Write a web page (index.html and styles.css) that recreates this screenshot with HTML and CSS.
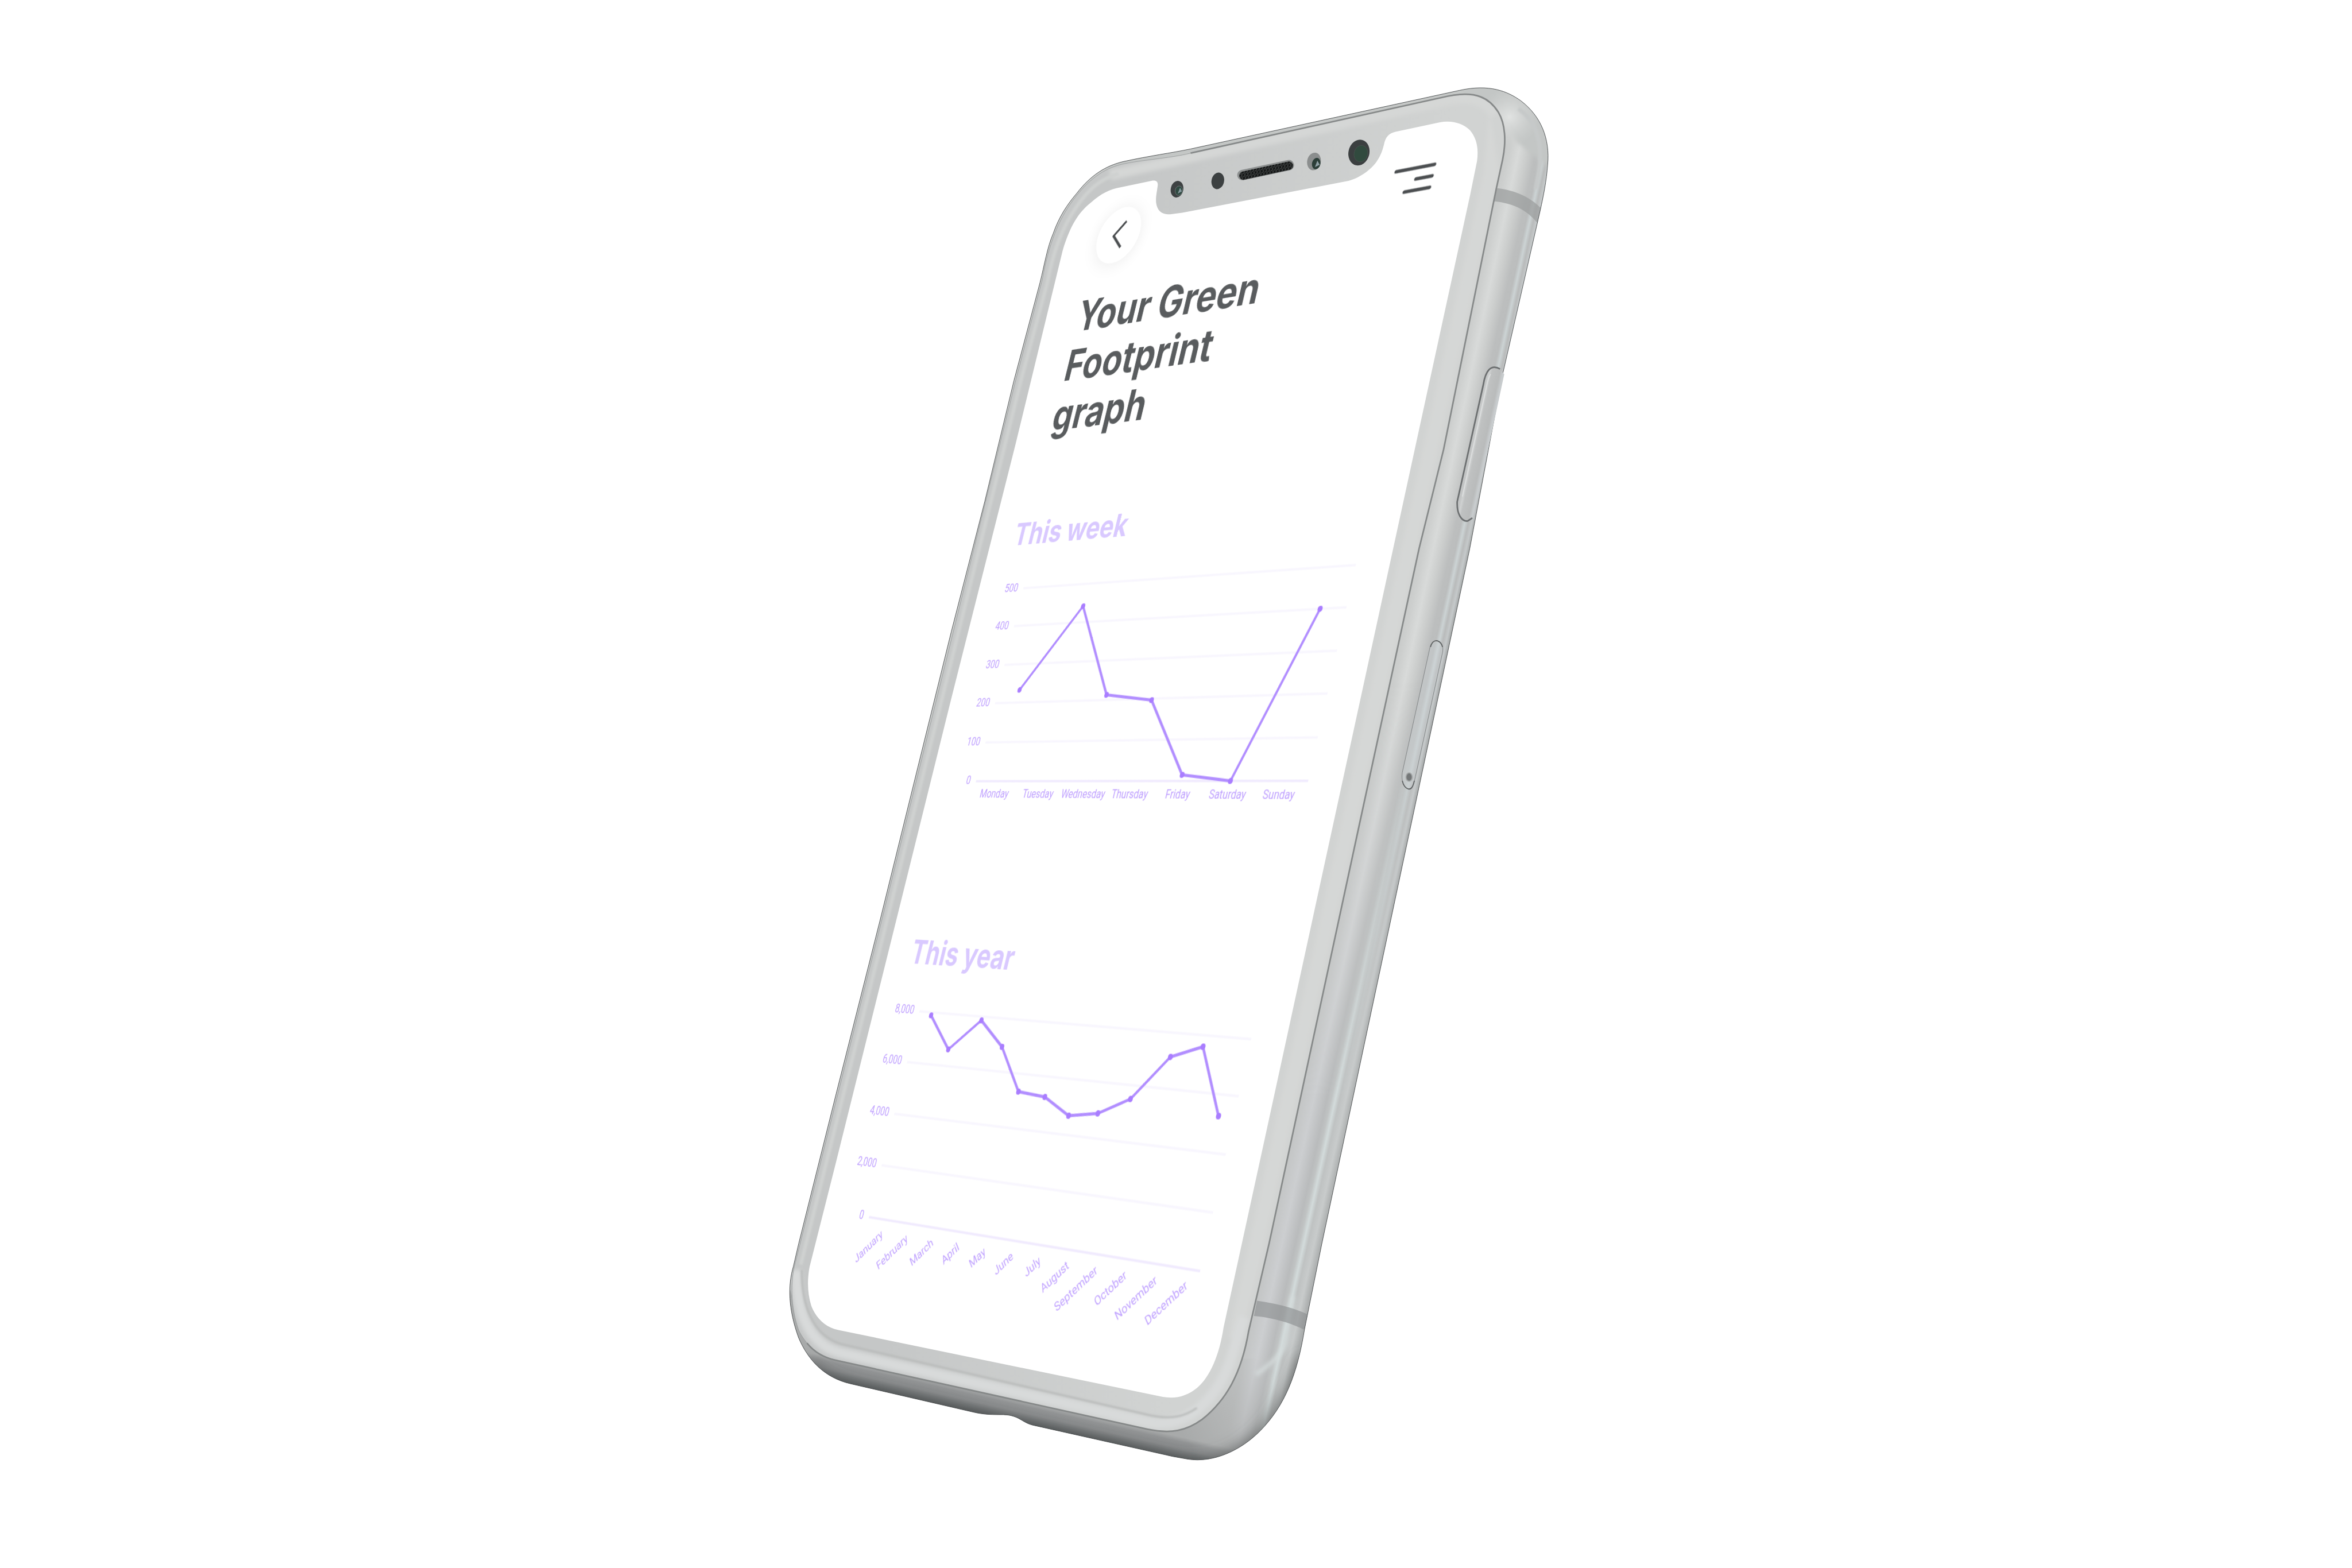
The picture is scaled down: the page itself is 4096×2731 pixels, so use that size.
FILE: index.html
```html
<!DOCTYPE html>
<html lang="en">
<head>
<meta charset="utf-8">
<meta name="viewport" content="width=device-width, initial-scale=1">
<title>Your Green Footprint graph</title>
<link rel="stylesheet" href="styles.css">
</head>
<body>
<main class="stage" id="stage">
  <svg class="phone" viewBox="0 0 4500 3000" aria-hidden="true">
    <defs>
      <linearGradient id="side" gradientUnits="userSpaceOnUse" x1="2715" y1="1050" x2="2808" y2="1070">
        <stop offset="0" stop-color="#c9cbca"/>
        <stop offset=".1" stop-color="#cdcfce"/>
        <stop offset=".28" stop-color="#d8dad9"/>
        <stop offset=".45" stop-color="#cbcdcc"/>
        <stop offset=".62" stop-color="#bcbebe"/>
        <stop offset=".72" stop-color="#bbbdbd"/>
        <stop offset=".79" stop-color="#ccd3d4"/>
        <stop offset=".86" stop-color="#b9bbbb"/>
        <stop offset=".93" stop-color="#c5c9ca"/>
        <stop offset="1" stop-color="#a3a6a6"/>
      </linearGradient>
      <linearGradient id="sideLow" gradientUnits="userSpaceOnUse" x1="2428" y1="2380" x2="2524" y2="2401">
        <stop offset="0" stop-color="#c3c5c5"/>
        <stop offset=".25" stop-color="#ccced0"/>
        <stop offset=".5" stop-color="#b9bbbc"/>
        <stop offset=".58" stop-color="#c0c3c3"/>
        <stop offset=".66" stop-color="#d3dbdb"/>
        <stop offset=".74" stop-color="#bfc2c2"/>
        <stop offset=".86" stop-color="#c8cbcb"/>
        <stop offset="1" stop-color="#abaeae"/>
      </linearGradient>
      <linearGradient id="lowFade" gradientUnits="userSpaceOnUse" x1="0" y1="1300" x2="0" y2="2100">
        <stop offset="0" stop-color="#000"/>
        <stop offset="1" stop-color="#fff"/>
      </linearGradient>
      <mask id="lowMask" maskUnits="userSpaceOnUse" x="1400" y="0" width="1700" height="3000">
        <rect x="1400" width="1700" height="3000" fill="url(#lowFade)"/>
      </mask>
      <linearGradient id="base" gradientUnits="userSpaceOnUse" x1="1901" y1="2668" x2="1891" y2="2712">
        <stop offset="0" stop-color="#a8aaaa"/>
        <stop offset=".2" stop-color="#929495"/>
        <stop offset=".5" stop-color="#888a8b"/>
        <stop offset=".6" stop-color="#7c7f80"/>
        <stop offset="1" stop-color="#55595a"/>
      </linearGradient>
      <linearGradient id="glass" gradientUnits="userSpaceOnUse" x1="1950" y1="1400" x2="2500" y2="1520">
        <stop offset="0" stop-color="#c5c7c7"/>
        <stop offset="1" stop-color="#d1d3d2"/>
      </linearGradient>
      <linearGradient id="baseFade" gradientUnits="userSpaceOnUse" x1="2250" y1="2720" x2="2420" y2="2620">
        <stop offset="0" stop-color="#fff"/>
        <stop offset="1" stop-color="#000"/>
      </linearGradient>
      <mask id="baseMask" maskUnits="userSpaceOnUse" x="1400" y="2300" width="1200" height="600">
        <rect x="1400" y="2300" width="1200" height="600" fill="url(#baseFade)"/>
      </mask>
      <radialGradient id="cornerGlow" gradientUnits="userSpaceOnUse" cx="2888" cy="224" r="56">
        <stop offset="0" stop-color="#e1e3e2"/>
        <stop offset="1" stop-color="#d4d6d5" stop-opacity="0"/>
      </radialGradient>
      <linearGradient id="key" gradientUnits="userSpaceOnUse" x1="2814" y1="860" x2="2856" y2="869">
        <stop offset="0" stop-color="#c2c4c4"/>
        <stop offset=".1" stop-color="#cfd1d1"/>
        <stop offset=".2" stop-color="#bfc1c1"/>
        <stop offset=".55" stop-color="#b9bbbb"/>
        <stop offset=".7" stop-color="#c9cdcf"/>
        <stop offset="1" stop-color="#b4b7b7"/>
      </linearGradient>
      <filter id="soft2" x="-20%" y="-20%" width="140%" height="140%"><feGaussianBlur stdDeviation="2"/></filter>
      <filter id="soft4" x="-20%" y="-20%" width="140%" height="140%"><feGaussianBlur stdDeviation="4"/></filter>
      <filter id="soft14" x="-20%" y="-20%" width="140%" height="140%"><feGaussianBlur stdDeviation="14"/></filter>
      <pattern id="mesh" width="6" height="6" patternUnits="userSpaceOnUse" patternTransform="rotate(-12)">
        <rect width="6" height="6" fill="#141616"/>
        <path d="M0 3h3M4 0v3M3 5h3" stroke="#5d6161" stroke-width="1"/>
      </pattern>
      <path id="body" d="M2150 309C2200 298 2240 293 2278 285L2792 173C2850 160 2885 175 2910 193C2948 222 2966 265 2961 316C2959 345 2953 375 2947 402L2875 716L2812 1050L2695 1600L2529 2380L2496 2543C2482 2630 2458 2690 2412 2737C2375 2775 2322 2800 2272 2792L2244 2787L1976 2727C1955 2722 1950 2708 1920 2707C1900 2707 1885 2707 1866 2703L1628 2648C1575 2636 1545 2600 1528 2560C1508 2505 1507 2460 1518 2423L1528 2380L1600 2092L1684 1760L1820 1209L1884 960L1940 728L1990 540C1998 508 2004 472 2015 447C2026 415 2042 391 2060 370C2086 336 2115 317 2150 309Z"/>
      <path id="seam" d="M2140 316C2170 307 2240 303 2278 293L2770 184C2825 173 2850 188 2867 215C2880 237 2882 270 2875 305L2863 360L2762 860L2715 1050L2596 1600L2428 2380L2389 2547C2375 2630 2345 2680 2300 2716C2270 2738 2240 2744 2196 2735L1600 2603C1560 2592 1540 2570 1528 2545C1512 2500 1512 2450 1522 2415L1688 1757L1944 725L1994 536C2004 480 2020 430 2048 390C2076 350 2105 326 2140 316Z"/>
      <path id="display" d="M2033 480C2048 430 2064 408 2082 392C2100 376 2115 365 2136 360L2203 346C2212 344 2216 348 2215 355C2213 370 2211 378 2212 388C2214 404 2224 411 2239 410L2262 407L2580 346C2600 341 2622 326 2634 309C2642 297 2645 288 2648 276C2651 262 2657 255 2670 252L2755 234C2780 229 2802 238 2813 250C2826 266 2829 285 2826 308L2813 372L2747 675L2640 1167L2420 2178L2341 2540C2333 2593 2315 2635 2290 2656C2270 2672 2250 2677 2225 2673L1604 2545C1578 2540 1560 2520 1552 2498C1545 2475 1544 2450 1549 2424L1600 2222L1715 1760L1820 1337L1943 850Z"/>
      <clipPath id="bodyClip"><use href="#body"/></clipPath>
      <clipPath id="seamClip"><use href="#seam"/></clipPath>
    </defs>

    <use href="#body" fill="url(#side)"/>
    <use href="#body" fill="url(#sideLow)" mask="url(#lowMask)"/>
    <g clip-path="url(#bodyClip)">
      <path d="M2100 200L2790 160L2960 150L2975 330L2900 270L2870 205L2790 178L2120 330Z" fill="#c3c6c5" filter="url(#soft4)"/>
      <circle cx="2888" cy="224" r="56" fill="url(#cornerGlow)"/>
      <path d="M2905 208C2942 232 2952 278 2944 330L2938 362" fill="none" stroke="#c6c9c9" stroke-width="8" filter="url(#soft2)"/>
      <path d="M1500 2420L1500 2850L2460 2850L2480 2600L2300 2600L2196 2733L1600 2601L1528 2530Z" fill="url(#base)" mask="url(#baseMask)"/>
      <path d="M1540 2620C1570 2655 1600 2665 1628 2672L2244 2812C2340 2830 2420 2770 2455 2710C2480 2670 2500 2630 2506 2600" fill="none" stroke="#4b4e4f" stroke-width="44" stroke-opacity=".7" filter="url(#soft14)"/>
      <path d="M2474 2480L2460 2567C2456 2590 2436 2606 2403 2630" fill="none" stroke="#d6dddd" stroke-width="7" filter="url(#soft4)"/>
      <path d="M2864 360C2900 364 2930 378 2952 402L2944 430C2925 405 2900 389 2857 385Z" fill="#9c9f9f" fill-opacity=".75"/>
      <path d="M2405 2489C2440 2494 2475 2502 2504 2516L2497 2545C2470 2532 2440 2522 2399 2518Z" fill="#8e9192" fill-opacity=".65"/>
    </g>
    <use href="#body" fill="none" stroke="#4a4d4e" stroke-width="1"/>

    <use href="#seam" fill="url(#glass)"/>
    <g clip-path="url(#seamClip)">
      <path d="M2850 215L2868 330L2415 2400L2375 2560L2350 2560L2385 2400L2838 330Z" fill="#d5d7d6" filter="url(#soft4)"/>
      <path d="M2124 335L2278 301L2770 192C2820 182 2845 195 2860 220" fill="none" stroke="#d5d7d6" stroke-width="20" filter="url(#soft4)"/>
      <path d="M1532 2420L1698 1757L1954 725L2004 540C2014 485 2032 436 2058 398C2082 362 2106 342 2140 332" fill="none" stroke="#cfd1d0" stroke-width="7" filter="url(#soft2)"/>
      <path d="M1524 2430C1524 2520 1552 2573 1606 2588L2200 2722C2262 2732 2320 2690 2352 2610L2380 2520" fill="none" stroke="#d8dada" stroke-width="20" filter="url(#soft4)"/>
      <path d="M1534 2430C1534 2510 1562 2558 1610 2572L2204 2709C2246 2717 2270 2708 2290 2694" fill="none" stroke="#babcbb" stroke-width="4" filter="url(#soft2)"/>
    </g>
    <use href="#seam" fill="none" stroke="#9a9d9d" stroke-width="1"/>
    <path d="M2278 293L2770 184C2825 173 2850 188 2867 215C2880 237 2882 270 2875 305L2863 360L2762 860L2715 1050L2596 1600L2428 2380L2389 2547C2375 2630 2345 2680 2300 2716C2270 2738 2240 2744 2196 2735L1600 2603C1575 2598 1556 2585 1544 2570" fill="none" stroke="#868989" stroke-width="3"/>

    <use href="#display" fill="#fff"/>

    <g transform="rotate(12 2252 362)">
      <ellipse cx="2252" cy="362" rx="12" ry="16" fill="#3e4243"/>
      <ellipse cx="2256" cy="364" rx="7" ry="9" fill="#2f4a41" stroke="#6f7677" stroke-width="1"/>
      <path d="M2257 358l5 6-7 6z" fill="#87999e"/>
    </g>
    <ellipse cx="2330" cy="346" rx="12" ry="16" fill="#3c4041" transform="rotate(12 2330 346)"/>
    <path d="M2377 335L2466 316" stroke="#8d9090" stroke-width="20" stroke-linecap="round"/>
    <path d="M2379 336L2466 317" stroke="url(#mesh)" stroke-width="16" stroke-linecap="round"/>
    <g transform="rotate(12 2514 309)">
      <ellipse cx="2514" cy="309" rx="13" ry="17" fill="#8b8e8e"/>
      <ellipse cx="2519" cy="312" rx="8" ry="11" fill="#2c3e38"/>
      <path d="M2520 306l6 7-8 6z" fill="#8fa0a5"/>
    </g>
    <g transform="rotate(14 2600 292)">
      <ellipse cx="2600" cy="292" rx="20" ry="25" fill="#3b3f40"/>
      <ellipse cx="2604" cy="293" rx="13" ry="16" fill="#314a3e" stroke="#46504c" stroke-width="1"/>
    </g>

    <path d="M2870 706C2852 696 2842 710 2838 736L2788 960C2787 985 2797 998 2808 997L2817 991L2828 950L2878 716Z" fill="url(#key)"/>
    <path d="M2870 706C2852 696 2842 710 2838 736L2788 960C2787 985 2797 998 2808 997L2817 991" fill="none" stroke="#6c6f70" stroke-width="3"/>
    <path d="M2852 716C2847 722 2845 735 2843 745L2798 950" fill="none" stroke="#dddfdf" stroke-width="2"/>
    <path d="M2735 1243C2738 1226 2746 1226 2749 1226C2758 1228 2762 1236 2760 1248L2708 1486C2704 1506 2700 1510 2695 1510C2684 1507 2681 1492 2683 1478Z" fill="#cfd5d6" fill-opacity=".35" stroke="#7b7e7f" stroke-width="1"/>
    <path d="M2737 1238C2740 1226 2746 1226 2749 1226C2754 1227 2758 1231 2760 1238M2706 1494C2703 1507 2700 1510 2695 1510C2688 1508 2685 1503 2683 1494" fill="none" stroke="#5f6263" stroke-width="2"/>
    <ellipse cx="2696" cy="1487" rx="6" ry="8" fill="#747778" stroke="#a5a8a8" stroke-width="2"/>
  </svg>

  <div class="screen" id="screen">
    <header class="bar">
      <button class="back" type="button" aria-label="Back">
        <svg viewBox="0 0 24 44" width="24" height="44"><path d="M22 2L2 22L22 42" fill="none" stroke="#4b4e50" stroke-width="4"/></svg>
      </button>
      <button class="menu" type="button" aria-label="Menu">
        <svg viewBox="0 0 70 38" width="70" height="38"><path d="M3 3H67M40 19H67M25 35H67" fill="none" stroke="#4b4e50" stroke-width="5" stroke-linecap="round"/></svg>
      </button>
    </header>
    <h1 class="title">Your Green<br>Footprint<br>graph</h1>

    <section class="report">
      <h2 class="period">This week</h2>
      <svg class="chart" viewBox="0 0 750 440" role="img" aria-label="Footprint this week">
        <path class="grid" d="M93 55H695M93 110H695M93 166H695M93 221H695M93 277H695"/>
        <path class="axis" d="M93 332H695"/>
        <g class="tick tick-y">
          <text x="82" y="59">500</text><text x="82" y="114">400</text><text x="82" y="170">300</text>
          <text x="82" y="225">200</text><text x="82" y="281">100</text><text x="82" y="336">0</text>
        </g>
        <g class="tick tick-x">
          <text x="136" y="355">Monday</text><text x="222" y="355">Tuesday</text><text x="308" y="355">Wednesday</text>
          <text x="394" y="355">Thursday</text><text x="480" y="355">Friday</text><text x="566" y="355">Saturday</text>
          <text x="652" y="355">Sunday</text>
        </g>
        <polyline class="line" points="136,203 222,87 308,214 394,223 480,324 566,332 652,110"/>
        <g class="dots">
          <circle cx="136" cy="203" r="4"/><circle cx="222" cy="87" r="4"/><circle cx="308" cy="214" r="4"/>
          <circle cx="394" cy="223" r="4"/><circle cx="480" cy="324" r="4"/><circle cx="566" cy="332" r="4"/>
          <circle cx="652" cy="110" r="4"/>
        </g>
      </svg>
    </section>

    <section class="report">
      <h2 class="period">This year</h2>
      <svg class="chart" viewBox="0 0 750 440" role="img" aria-label="Footprint this year">
        <path class="grid" d="M93 54H695M93 123H695M93 193H695M93 262H695"/>
        <path class="axis" d="M93 331H695"/>
        <g class="tick tick-y">
          <text x="82" y="58">8,000</text><text x="82" y="127">6,000</text><text x="82" y="197">4,000</text>
          <text x="82" y="266">2,000</text><text x="82" y="335">0</text>
        </g>
        <g class="tick tick-slant">
          <text transform="translate(130 352) rotate(-45)">January</text>
          <text transform="translate(180 352) rotate(-45)">February</text>
          <text transform="translate(230 352) rotate(-45)">March</text>
          <text transform="translate(280 352) rotate(-45)">April</text>
          <text transform="translate(330 352) rotate(-45)">May</text>
          <text transform="translate(381 352) rotate(-45)">June</text>
          <text transform="translate(431 352) rotate(-45)">July</text>
          <text transform="translate(481 352) rotate(-45)">August</text>
          <text transform="translate(531 352) rotate(-45)">September</text>
          <text transform="translate(581 352) rotate(-45)">October</text>
          <text transform="translate(632 352) rotate(-45)">November</text>
          <text transform="translate(682 352) rotate(-45)">December</text>
        </g>
        <polyline class="line" points="118,58 168,101 218,59 269,91 319,146 369,149 419,169 469,162 519,140 570,84 620,68 670,149"/>
        <g class="dots">
          <circle cx="118" cy="58" r="4"/><circle cx="168" cy="101" r="4"/><circle cx="218" cy="59" r="4"/>
          <circle cx="269" cy="91" r="4"/><circle cx="319" cy="146" r="4"/><circle cx="369" cy="149" r="4"/>
          <circle cx="419" cy="169" r="4"/><circle cx="469" cy="162" r="4"/><circle cx="519" cy="140" r="4"/>
          <circle cx="570" cy="84" r="4"/><circle cx="620" cy="68" r="4"/><circle cx="670" cy="149" r="4"/>
        </g>
      </svg>
    </section>
  </div>
</main>
<script src="script.js"></script>
</body>
</html>
```
FILE: styles.css
```css
* {
  box-sizing: border-box;
}

body {
  margin: 0;
  background: #fff;
  overflow: hidden;
  font-family: Inter, "Noto Sans", sans-serif;
}

.stage {
  position: relative;
  width: 100%;
}

.phone {
  display: block;
  width: 100%;
  height: auto;
}

/* Flat app screen, laid over the phone's glass in perspective. */
.screen {
  position: absolute;
  top: 0;
  left: 0;
  width: 750px;
  height: 1624px;
  transform-origin: 0 0;
}

.bar {
  display: flex;
  align-items: center;
  justify-content: space-between;
  padding: 32px 68px 0;
}

.back,
.menu {
  display: flex;
  align-items: center;
  justify-content: center;
  padding: 0;
  border: 0;
  background: none;
}

.back {
  width: 86px;
  height: 86px;
  border-radius: 50%;
  background: #fff;
  box-shadow: 0 2px 28px rgba(0, 0, 0, 0.08);
}

.title {
  margin: 38px 68px 0;
  color: #595c5e;
  font-size: 64px;
  font-weight: 700;
  line-height: 75px;
}

.report {
  margin-top: 113px;
}

.report + .report {
  margin-top: 106px;
}

.period {
  margin: 0 48px;
  color: #d9c9ff;
  font-size: 45px;
  font-weight: 700;
  line-height: 52px;
}

.chart {
  display: block;
  width: 100%;
  height: auto;
  overflow: visible;
}

.grid,
.axis,
.line {
  fill: none;
}

.grid {
  stroke: #f8f6fe;
  stroke-width: 3;
}

.axis {
  stroke: #f0eafe;
  stroke-width: 3;
}

.line {
  stroke: #b18dff;
  stroke-width: 4;
  stroke-linejoin: round;
}

.dots {
  fill: #a97dff;
}

.tick {
  fill: #be9fff;
  font-family: Roboto, sans-serif;
  font-size: 16px;
}

.tick-y,
.tick-slant {
  text-anchor: end;
}

.tick-x {
  text-anchor: middle;
}
```
FILE: script.js
```js
// Projects the flat app screen onto the four corners of the phone's glass.
// Corners are in the units of the phone drawing, which is 4500 wide.
const DRAWING_WIDTH = 4500;
const CORNERS = [[2059, 378], [2847, 216.5], [2308, 2691], [1524, 2528]];

function project() {
  const stage = document.getElementById('stage');
  const screen = document.getElementById('screen');
  const k = stage.clientWidth / DRAWING_WIDTH;
  const [tl, tr, br, bl] = CORNERS.map(([x, y]) => [x * k, y * k]);
  const w = screen.offsetWidth;
  const h = screen.offsetHeight;

  const x1 = tr[0] - br[0], y1 = tr[1] - br[1];
  const x2 = bl[0] - br[0], y2 = bl[1] - br[1];
  const x3 = tl[0] - tr[0] + br[0] - bl[0];
  const y3 = tl[1] - tr[1] + br[1] - bl[1];
  const det = x1 * y2 - x2 * y1;
  const g = (x3 * y2 - x2 * y3) / det;
  const i = (x1 * y3 - x3 * y1) / det;

  const m = [
    (tr[0] - tl[0] + g * tr[0]) / w, (tr[1] - tl[1] + g * tr[1]) / w, 0, g / w,
    (bl[0] - tl[0] + i * bl[0]) / h, (bl[1] - tl[1] + i * bl[1]) / h, 0, i / h,
    0, 0, 1, 0,
    tl[0], tl[1], 0, 1
  ];
  screen.style.transform = `matrix3d(${m.join(',')})`;
}

project();
addEventListener('resize', project);
```
